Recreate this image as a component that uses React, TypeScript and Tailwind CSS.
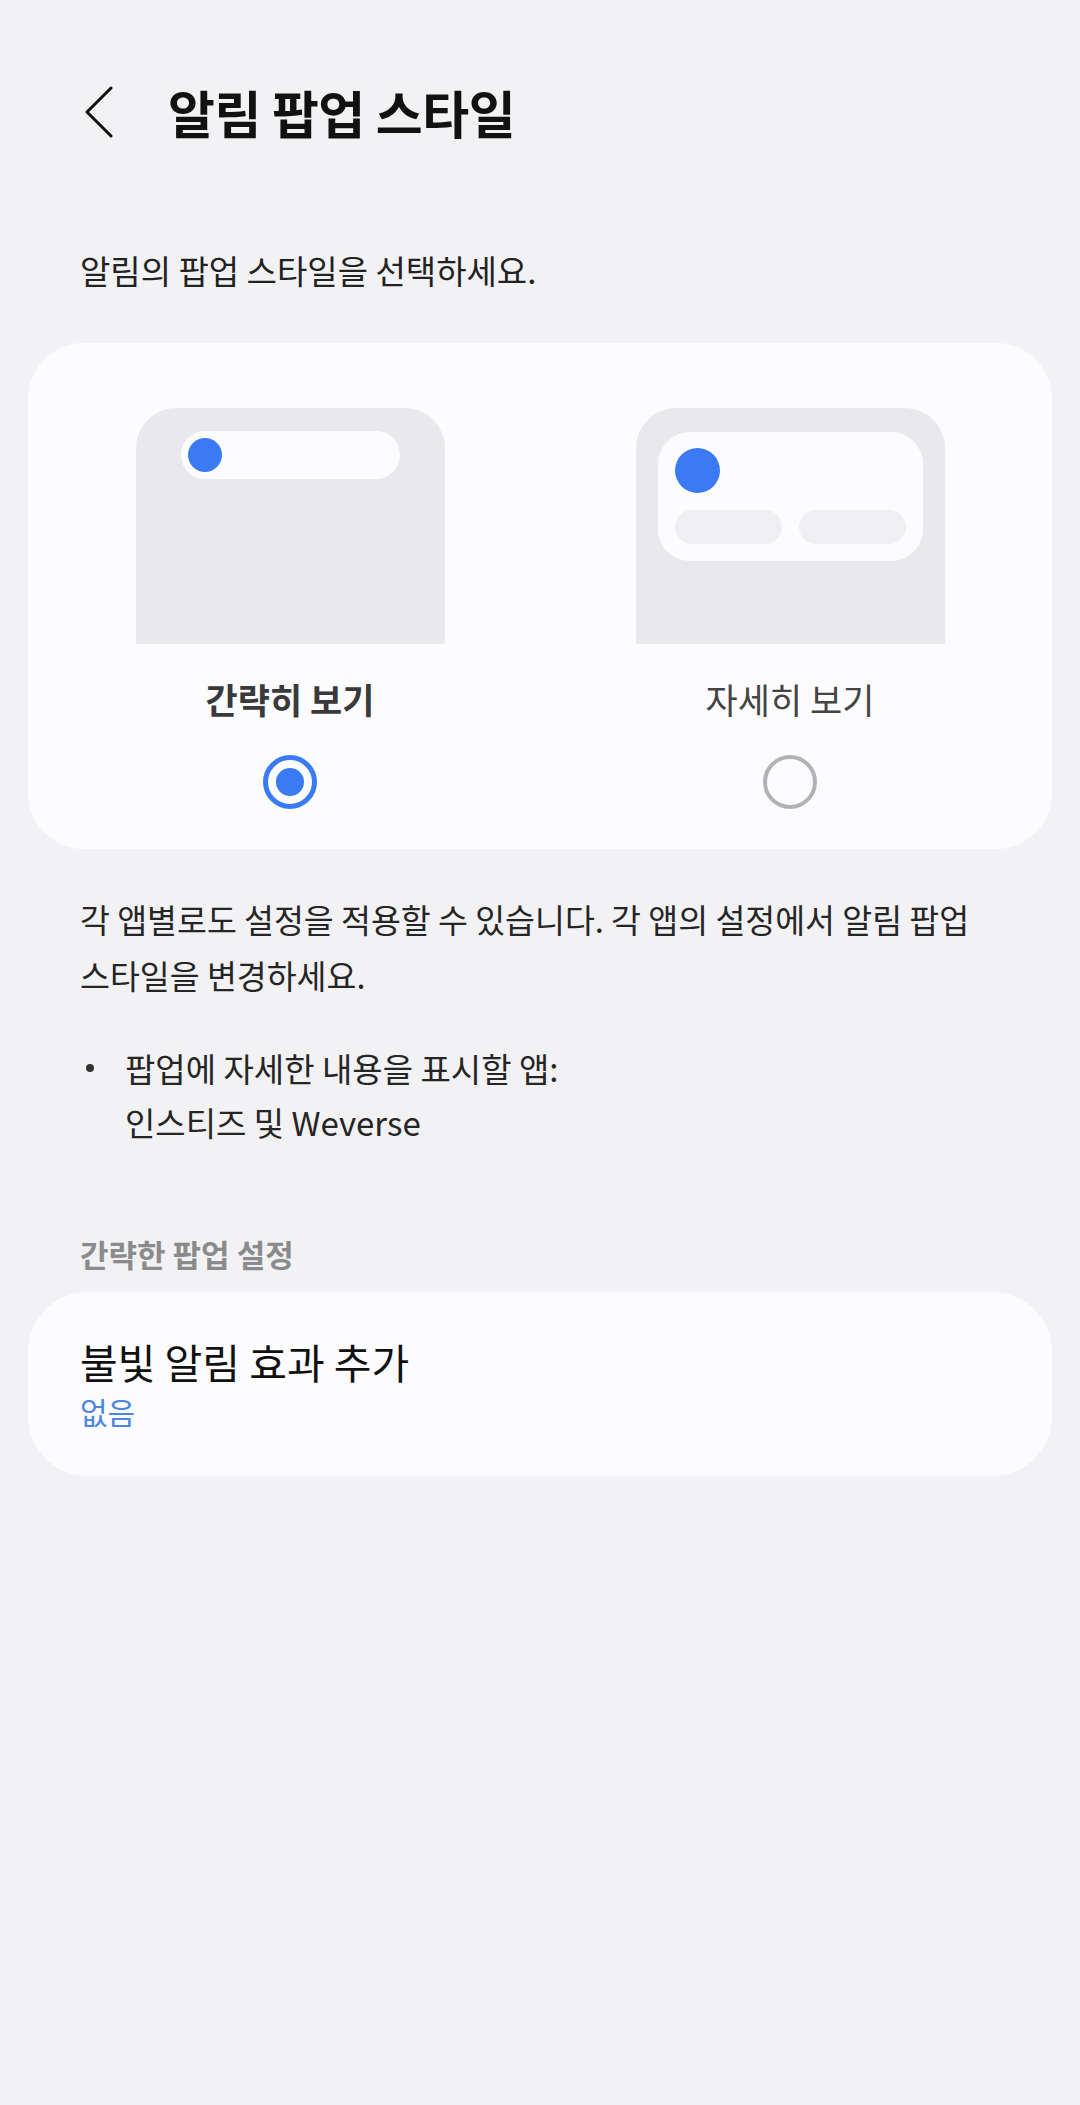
import React from "react";

const font = "font-['Noto_Sans_CJK_KR','Noto_Sans',sans-serif]";

function BackIcon() {
  return (
    <svg width="30" height="52" viewBox="0 0 30 52" fill="none">
      <polyline
        points="27,2 3,26 27,50"
        stroke="#111"
        strokeWidth="3"
        strokeLinecap="round"
        strokeLinejoin="round"
      />
    </svg>
  );
}

function Radio({ checked }: { checked: boolean }) {
  return checked ? (
    <div className="flex h-[54px] w-[54px] items-center justify-center rounded-full border-[5px] border-[#3a7bf5]">
      <div className="h-[28px] w-[28px] rounded-full bg-[#3a7bf5]" />
    </div>
  ) : (
    <div className="h-[54px] w-[54px] rounded-full border-[4px] border-[#b2b2b4]" />
  );
}

function BriefPreview() {
  return (
    <div className="h-[236px] w-[309px] rounded-t-[40px] bg-[#e9e9eb] pl-[45px] pt-[23px]">
      <div className="flex h-[48px] w-[219px] items-center rounded-full bg-[#fcfcfe] pl-[7px]">
        <div className="h-[34px] w-[34px] rounded-full bg-[#3a7bf5]" />
      </div>
    </div>
  );
}

function DetailPreview() {
  return (
    <div className="h-[236px] w-[309px] rounded-t-[40px] bg-[#e9e9eb] pl-[22px] pt-[24px]">
      <div className="flex h-[129px] w-[265px] flex-col rounded-[32px] bg-[#fcfcfe] px-[17px] pt-[16px]">
        <div className="h-[45px] w-[45px] rounded-full bg-[#3a7bf5]" />
        <div className="mt-[17px] flex gap-[17px]">
          <div className="h-[34px] w-[107px] rounded-full bg-[#efeff1]" />
          <div className="h-[34px] w-[107px] rounded-full bg-[#efeff1]" />
        </div>
      </div>
    </div>
  );
}

export default function App() {
  return (
    <div className={`min-h-[2105px] w-[1080px] bg-[#f2f2f4] pt-[62px] ${font}`}>
      <header className="flex h-[100px] items-center">
        <div className="ml-[84px] flex w-[30px] items-center">
          <BackIcon />
        </div>
        <h1 className="ml-[54px] text-[51px] font-bold leading-none tracking-[-0.5px] text-[#111]">
          알림 팝업 스타일
        </h1>
      </header>

      <p className="ml-[80px] mt-[88px] text-[33px] leading-[40px] text-[#222]">
        알림의 팝업 스타일을 선택하세요.
      </p>

      <section className="mx-[28px] mt-[53px] grid h-[506px] grid-cols-2 rounded-[56px] bg-[#fcfcfe] px-[12px] pt-[65px]">
        <div className="flex flex-col items-center">
          <BriefPreview />
          <span className="mt-[33px] text-[35px] font-bold leading-[44px] text-[#3a3a3a]">
            간략히 보기
          </span>
          <div className="mt-[34px]">
            <Radio checked />
          </div>
        </div>
        <div className="flex flex-col items-center">
          <DetailPreview />
          <span className="mt-[33px] text-[35px] leading-[44px] text-[#444]">
            자세히 보기
          </span>
          <div className="mt-[34px]">
            <Radio checked={false} />
          </div>
        </div>
      </section>

      <p className="ml-[80px] mr-[30px] mt-[42px] text-[32.5px] leading-[56px] text-[#252525]">
        각 앱별로도 설정을 적용할 수 있습니다. 각 앱의 설정에서 알림 팝업
        <br />
        스타일을 변경하세요.
      </p>

      <ul className="ml-[80px] mt-[38px] text-[33px] leading-[54px] text-[#252525]">
        <li className="flex">
          <span className="flex w-[45px] items-start pl-[6px] pt-[23px]">
            <span className="h-[8px] w-[8px] rounded-full bg-[#333]" />
          </span>
          <span>
            팝업에 자세한 내용을 표시할 앱:
            <br />
            인스티즈 및 Weverse
          </span>
        </li>
      </ul>

      <h2 className="ml-[80px] mt-[85px] text-[31px] font-semibold leading-[40px] text-[#8b8b8d]">
        간략한 팝업 설정
      </h2>

      <section className="mx-[28px] mt-[18px] flex h-[184px] flex-col rounded-[60px] bg-[#fcfcfe] pl-[52px] pt-[45px]">
        <span className="text-[41px] leading-[48px] text-[#111]">
          불빛 알림 효과 추가
        </span>
        <span className="mt-[8px] text-[30px] leading-[36px] text-[#4b86e6]">
          없음
        </span>
      </section>
    </div>
  );
}
